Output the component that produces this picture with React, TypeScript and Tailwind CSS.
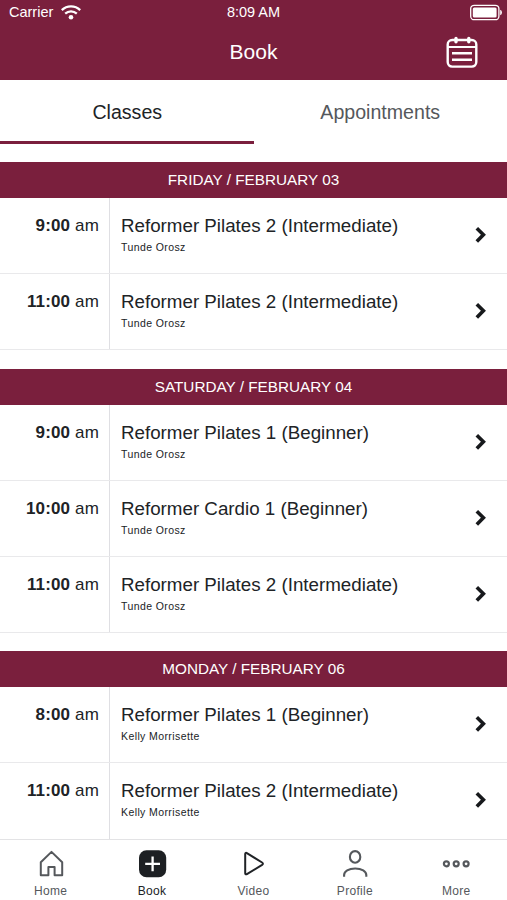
import clsx from 'clsx';

const days = [
  {
    label: 'FRIDAY / FEBRUARY 03',
    classes: [
      { time: '9:00', name: 'Reformer Pilates 2 (Intermediate)', teacher: 'Tunde Orosz' },
      { time: '11:00', name: 'Reformer Pilates 2 (Intermediate)', teacher: 'Tunde Orosz' },
    ],
  },
  {
    label: 'SATURDAY / FEBRUARY 04',
    classes: [
      { time: '9:00', name: 'Reformer Pilates 1 (Beginner)', teacher: 'Tunde Orosz' },
      { time: '10:00', name: 'Reformer Cardio 1 (Beginner)', teacher: 'Tunde Orosz' },
      { time: '11:00', name: 'Reformer Pilates 2 (Intermediate)', teacher: 'Tunde Orosz' },
    ],
  },
  {
    label: 'MONDAY / FEBRUARY 06',
    classes: [
      { time: '8:00', name: 'Reformer Pilates 1 (Beginner)', teacher: 'Kelly Morrisette' },
      { time: '11:00', name: 'Reformer Pilates 2 (Intermediate)', teacher: 'Kelly Morrisette' },
    ],
  },
];

function WifiIcon() {
  return (
    <svg width="20" height="15" viewBox="0 0 20 15" fill="none" stroke="white" strokeWidth="2.3">
      <path d="M.8 5.1C6 .2 14 .2 19.2 5.1" />
      <path d="M4.2 8.7c3.3-3 8.3-3 11.6 0" />
      <circle cx="10" cy="12.2" r="2.3" fill="white" stroke="none" />
    </svg>
  );
}

function BatteryIcon() {
  return (
    <svg width="33" height="17" viewBox="0 0 33 17" fill="none">
      <rect x=".7" y="1.3" width="28.2" height="14.4" rx="3.5" stroke="white" strokeWidth="1.3" />
      <rect x="2.8" y="3.6" width="23.8" height="9.8" rx="1.5" fill="white" />
      <path d="M30.2 5.8c2.3.8 2.3 4.7 0 5.5z" fill="white" />
    </svg>
  );
}

function CalendarIcon() {
  return (
    <svg width="32" height="32" viewBox="0 0 32 32" fill="none" stroke="white" strokeWidth="2.4">
      <rect x="1.7" y="4" width="28.6" height="26.6" rx="4.5" />
      <path d="M2 11h28" strokeWidth="2" />
      <path d="M10 2.4v3.4M22.8 2.4v3.4" strokeWidth="3.4" strokeLinecap="round" />
      <path d="M6 17.2h20M6 23.7h20" />
    </svg>
  );
}

function Chevron() {
  return (
    <svg width="12" height="18" viewBox="0 0 12 18" fill="none" stroke="#17191c" strokeWidth="3.6">
      <path d="M1.8 2.2 8.4 8.8 1.8 15.4" />
    </svg>
  );
}

function HomeIcon() {
  return (
    <svg width="30" height="30" viewBox="0 0 30 30" fill="none" stroke="#55585c" strokeWidth="2" strokeLinejoin="round">
      <path d="M4.8 26.2V13.3L15.5 2.9l10.7 10.4v12.9h-7.6v-8.1h-6.2v8.1z" />
    </svg>
  );
}

function BookIcon() {
  return (
    <svg width="30" height="30" viewBox="0 0 30 30">
      <rect x="2" y="1.2" width="27.2" height="27" rx="7.5" fill="#1d2023" />
      <path d="M15.6 7.4v14.8M8.2 14.8H23" stroke="white" strokeWidth="2.3" />
    </svg>
  );
}

function VideoIcon() {
  return (
    <svg width="30" height="30" viewBox="0 0 30 30" fill="none" stroke="#202326" strokeWidth="2" strokeLinejoin="round">
      <path d="M7.2 4.9c0-1 .9-1.3 1.7-.8l15.2 9.4c1.1.7 1.1 1.7 0 2.4L8.9 25.1c-.8.5-1.7.2-1.7-.8z" />
    </svg>
  );
}

function ProfileIcon() {
  return (
    <svg width="30" height="30" viewBox="0 0 30 30" fill="none" stroke="#55585c" strokeWidth="2.1">
      <ellipse cx="15.1" cy="7.9" rx="5.2" ry="5.8" />
      <path d="M4.1 27.8v-1.7c0-3.7 4.5-6.6 11.1-6.6s11.1 2.9 11.1 6.6v1.7" />
    </svg>
  );
}

function MoreIcon() {
  return (
    <svg width="30" height="30" viewBox="0 0 30 30" fill="none" stroke="#55585c" strokeWidth="2.2">
      <circle cx="5.4" cy="14.8" r="2.5" />
      <circle cx="15.2" cy="14.8" r="2.5" />
      <circle cx="25.1" cy="14.8" r="2.5" />
    </svg>
  );
}

const tabs = [
  { icon: HomeIcon, label: 'Home' },
  { icon: BookIcon, label: 'Book', active: true },
  { icon: VideoIcon, label: 'Video' },
  { icon: ProfileIcon, label: 'Profile' },
  { icon: MoreIcon, label: 'More' },
];

export default function App() {
  return (
    <div className="flex h-[900px] w-[507px] flex-col overflow-hidden bg-white font-['Liberation_Sans',Arial,sans-serif] text-[#202326]">
      <header className="h-20 shrink-0 bg-[#7a1f3d] text-white">
        <div className="grid h-[25px] grid-cols-3 items-center pr-1 pl-[9px] text-[14.5px]">
          <div className="flex items-center gap-2">
            <span className="pt-px">Carrier</span>
            <WifiIcon />
          </div>
          <span className="pr-[5px] text-center">8:09 AM</span>
          <div className="flex justify-end">
            <BatteryIcon />
          </div>
        </div>
        <div className="grid h-[54px] grid-cols-3 items-center px-[29px]">
          <h1 className="col-start-2 text-center text-[21px]">Book</h1>
          <div className="flex justify-end">
            <CalendarIcon />
          </div>
        </div>
      </header>

      <div className="grid h-16 shrink-0 grid-cols-2 text-[19.6px]">
        <button className="border-b-[3.5px] border-[#7a1f3d] pt-1 pl-px">Classes</button>
        <button className="border-b-[3.5px] border-transparent pt-1 text-[#55585c]">Appointments</button>
      </div>

      <main className="min-h-0 flex-1 overflow-hidden">
        {days.map((day) => (
          <section key={day.label} className="pt-[18.2px]">
            <h2 className="h-9 bg-[#7a1f3d] text-center text-[15.3px] leading-[35px] text-white">{day.label}</h2>
            {day.classes.map((c) => (
              <div key={c.time} className="flex h-[76.15px] border-b border-[#e9e9eb]">
                <div className="w-[110px] border-r border-[#dfdfe3] pt-[17px] pr-2.5 text-right text-[17px] leading-[22px] tracking-[0.15px]">
                  <b>{c.time}</b> am
                </div>
                <div className="flex-1 pt-4 pl-[11px]">
                  <div className="text-[18.75px] leading-6">{c.name}</div>
                  <div className="mt-px text-[10.5px] leading-4 tracking-[0.4px]">{c.teacher}</div>
                </div>
                <div className="flex items-center pr-5 pb-px">
                  <Chevron />
                </div>
              </div>
            ))}
          </section>
        ))}
      </main>

      <nav className="grid h-[61px] shrink-0 grid-cols-5 border-t border-[#e3e3e5] bg-white pt-[9px]">
        {tabs.map((tab) => (
          <div key={tab.label} className={clsx('flex flex-col items-center gap-1', tab.active ? 'text-[#202326]' : 'text-[#55585c]')}>
            <tab.icon />
            <span className="text-[12px] leading-4 tracking-[0.3px]">{tab.label}</span>
          </div>
        ))}
      </nav>
    </div>
  );
}
